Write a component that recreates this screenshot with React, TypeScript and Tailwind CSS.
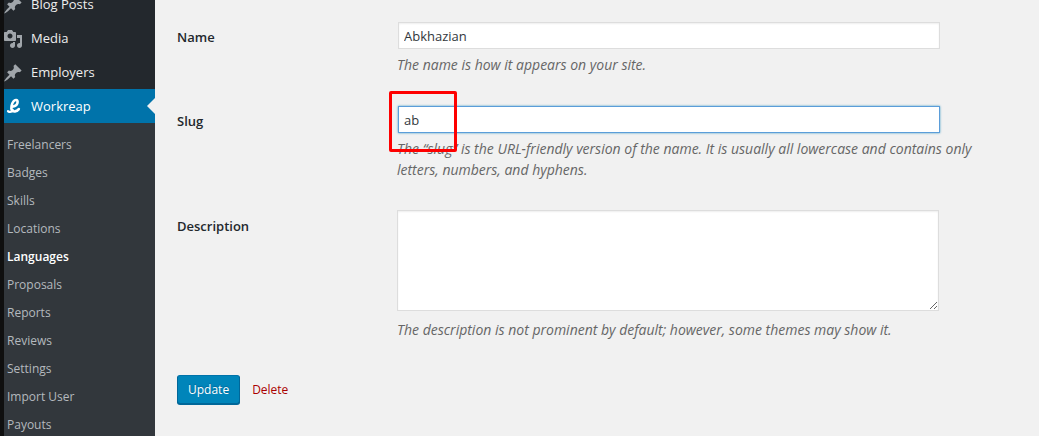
import React, { useState } from 'react';

type IconName = 'pin' | 'media' | 'workreap';

interface MenuItem {
  label: string;
  icon: IconName;
  current?: boolean;
}

const menu: MenuItem[] = [
  { label: 'Blog Posts', icon: 'pin' },
  { label: 'Media', icon: 'media' },
  { label: 'Employers', icon: 'pin' },
  { label: 'Workreap', icon: 'workreap', current: true },
];

const submenu = [
  'Freelancers',
  'Badges',
  'Skills',
  'Locations',
  'Languages',
  'Proposals',
  'Reports',
  'Reviews',
  'Settings',
  'Import User',
  'Payouts',
];

function MenuIcon({ name }: { name: IconName }) {
  if (name === 'workreap') {
    return (
      <svg viewBox="0 0 20 20" className="h-5 w-5 shrink-0" fill="none" stroke="#fff" strokeLinecap="round" strokeLinejoin="round">
        <path strokeWidth="2.6" d="M9.2 9.8c3-.6 5.400-2.500 5.400-4.900 0-2.200-2.500-2.500-4-.6-2 2.600-2.900 6.700-1.700 8.800 1.200 2.100 4.700 1.700 6.900-1" />
        <path strokeWidth="2.2" d="M5 14.200c1.600 1 3.800.7 5.200-.9" />
      </svg>
    );
  }
  return (
    <svg viewBox="0 0 20 20" className="h-5 w-5 shrink-0" fill="#a0a5aa">
      {name === 'pin' ? (
        <path d="M10.44 3.02l1.82-1.82 6.36 6.35-1.83 1.82c-1.05-.68-2.48-.57-3.41.36l-.75.75c-.92.93-1.04 2.35-.35 3.41l-1.83 1.82-2.41-2.41-2.8 2.79c-.42.42-3.38 2.71-3.8 2.29s1.86-3.39 2.28-3.81l2.79-2.79L4.1 9.36l1.83-1.82c1.05.69 2.48.57 3.4-.36l.75-.75c.93-.92 1.05-2.35.36-3.41z" />
      ) : (
        <path d="M13 11V4c0-.55-.45-1-1-1h-1.67L9 1H5L3.67 3H2c-.55 0-1 .45-1 1v7c0 .55.45 1 1 1h10c.55 0 1-.45 1-1zM7 4.5c1.38 0 2.5 1.12 2.5 2.5S8.38 9.5 7 9.5 4.5 8.38 4.5 7 5.62 4.5 7 4.5zM14 6h5v10.5c0 1.38-1.12 2.5-2.5 2.5S14 17.88 14 16.5s1.12-2.5 2.5-2.5c.17 0 .34.02.5.05V9h-3V6zm-4 8.05V13h2v3.5c0 1.38-1.12 2.5-2.5 2.5S7 17.88 7 16.5 8.12 14 9.5 14c.17 0 .34.02.5.05z" />
      )}
    </svg>
  );
}

function Row({ id, label, children }: { id: string; label: string; children: React.ReactNode }) {
  return (
    <div className="flex">
      <label htmlFor={id} className="w-[220px] shrink-0 pt-[6px] font-semibold leading-[21px] text-[#23282d]">
        {label}
      </label>
      <div className="min-w-0 flex-1 pr-[9px]">{children}</div>
    </div>
  );
}

export default function App() {
  const [name, setName] = useState('Abkhazian');
  const [slug, setSlug] = useState('ab');
  const [description, setDescription] = useState('');

  return (
    <div className="flex h-screen overflow-hidden bg-[#f1f1f1] font-['Open_Sans',sans-serif] text-[13px] text-[#444]">
      {/* Admin menu */}
      <nav className="w-[155px] shrink-0 overflow-hidden border-l-4 border-[#0f0f0f] bg-[#32373c]">
        <ul className="-mt-[13px] bg-[#23282d]">
          {menu.map((item) => (
            <li key={item.label}>
              <a
                href="#"
                className={
                  item.current
                    ? 'relative flex h-[34px] items-center gap-2 bg-[#0073aa] pt-[2px] text-white'
                    : 'relative flex h-[34px] items-center gap-2 pt-[2px] text-[#eee]'
                }
              >
                <span className="-ml-px">
                  <MenuIcon name={item.icon} />
                </span>
                {item.label}
                {item.current && (
                  <span className="absolute right-0 top-[9px] border-8 border-transparent border-r-[#f1f1f1]" />
                )}
              </a>
            </li>
          ))}
        </ul>
        <ul className="py-2 text-[12px]">
          {submenu.map((item) => (
            <li key={item}>
              <a
                href="#"
                className={
                  item === 'Languages'
                    ? 'flex h-7 items-center pl-[3px] font-semibold text-white'
                    : 'flex h-7 items-center pl-[3px] text-[#b4b9be]'
                }
              >
                {item}
              </a>
            </li>
          ))}
        </ul>
      </nav>

      {/* Edit form */}
      <main className="min-w-0 flex-1 pl-[22px] pt-[21px]">
        <form className="max-w-[800px]" onSubmit={(e) => e.preventDefault()}>
          <div className="space-y-[30px]">
            <Row id="name" label="Name">
              <input
                id="name"
                type="text"
                value={name}
                onChange={(e) => setName(e.target.value)}
                className="m-px block h-[27px] w-[95%] border border-[#ddd] bg-white px-[5px] text-[#32373c] shadow-[inset_0_1px_2px_rgba(0,0,0,0.07)] outline-none"
              />
              <p className="-mr-2 mt-[5px] text-[14px] italic leading-[21px] text-[#666]">
                The name is how it appears on your site.
              </p>
            </Row>

            <Row id="slug" label="Slug">
              <div className="relative">
                <input
                  id="slug"
                  type="text"
                  value={slug}
                  onChange={(e) => setSlug(e.target.value)}
                  className="m-px block h-[27px] w-[95%] border border-[#5b9dd9] bg-white px-[5px] text-[#32373c] shadow-[0_0_2px_rgba(30,140,190,0.8)] outline-none"
                />
                <span className="pointer-events-none absolute -left-2 -top-[15px] h-[61px] w-[68px] rounded-[2px] border-3 border-[#fe0000]" />
              </div>
              <p className="-mr-2 mt-[5px] text-[14px] italic leading-[21px] text-[#666]">
                The “slug” is the URL-friendly version of the name. It is usually all lowercase and contains only
                letters, numbers, and hyphens.
              </p>
            </Row>

            <Row id="description" label="Description">
              <textarea
                id="description"
                value={description}
                onChange={(e) => setDescription(e.target.value)}
                className="block h-[101px] w-[95%] resize border border-[#ddd] bg-white px-[6px] py-[2px] text-[#32373c] shadow-[inset_0_1px_2px_rgba(0,0,0,0.07)] outline-none"
              />
              <p className="-mr-2 mt-2 text-[14px] italic leading-[21px] text-[#666]">
                The description is not prominent by default; however, some themes may show it.
              </p>
            </Row>
          </div>

          <div className="mt-[35px] flex items-center gap-3 text-[12px]">
            <button
              type="submit"
              className="h-[29px] rounded-[3px] border border-[#006799] border-t-[#0073aa] bg-[#0085ba] px-[10px] text-white shadow-[0_1px_0_#006799] [text-shadow:0_-1px_1px_#006799]"
            >
              Update
            </button>
            <a href="#" className="text-[#a00]">
              Delete
            </a>
          </div>
        </form>
      </main>
    </div>
  );
}
